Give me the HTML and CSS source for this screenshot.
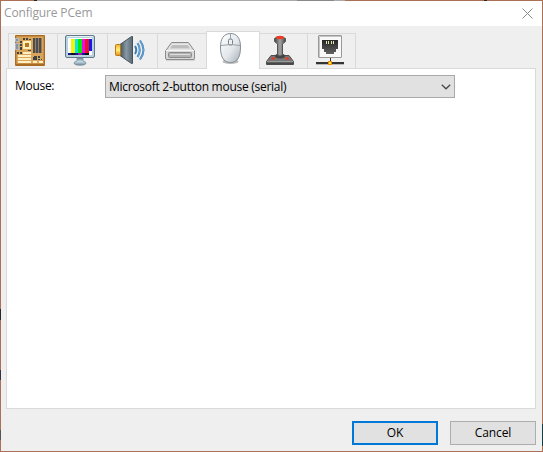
FILE: index.html
```html
<!DOCTYPE html>
<html lang="en">
<head>
<meta charset="utf-8">
<title>Configure PCem</title>
<link rel="stylesheet" href="styles.css">
</head>
<body>
<div class="window">
  <header class="titlebar">
    <span class="title">Configure PCem</span>
    <svg class="close" width="11" height="11" viewBox="0 0 11 11"><path d="M.5 .5l10 10M10.5 .5l-10 10" stroke="#888" fill="none"/></svg>
  </header>
  <nav class="tabs">
    <div class="tab machine">
      <svg width="32" height="32" viewBox="0 0 32 32">
        <rect x="1" y="1" width="30" height="31" rx="1" fill="#a96c25"/>
        <rect x="2" y="2" width="28" height="28" fill="#c98e43"/>
        <path d="M3 3h26v26H3z" fill="#d9a45c"/>
        <path d="M19 4h2v15h-2zM22 4h2v15h-2zM25 4h2v15h-2z" fill="#4a4d52"/>
        <path d="M21 4h1v15h-1zM24 4h1v15h-1zM27 4h1v15h-1z" fill="#9b7e55"/>
        <rect x="9" y="7" width="8" height="8" fill="#fff0b8"/><rect x="11" y="9" width="4" height="4" fill="#b57628"/>
        <path d="M9 4h2v2H9zM12 4h2v2h-2zM15 5h2v1h-2zM6 7h2v2H6zM6 10h2v2H6zM6 13h2v3H6zM14 16h3v1h-3zM3 18h2v2H3zM6 18h2v2H6z" fill="#474238"/>
        <path d="M1 4h4v4H1zM1 9h4v7H1z" fill="#aeb9c2"/><path d="M2 5h2v2H2zM2 10h2v5H2z" fill="#8194a5"/>
        <path d="M9 18h8v2H9zM4 21h13v2H4zM4 24h13v2H4zM4 27h13v2H4zM19 27h4v2h-4zM25 27h4v2h-4z" fill="#fff0c2"/>
        <path d="M19 23h4v3h-4zM20 22h3v1h-3zM24 22h2v2h-2zM24 25h2v1h-2zM27 25h1v1h-1z" fill="#3d4248"/>
      </svg>
    </div>
    <div class="tab">
      <svg width="32" height="32" viewBox="0 0 32 32">
        <defs><linearGradient id="stand" x2="0" y2="1"><stop stop-color="#6f8798"/><stop offset=".5" stop-color="#c5dae7"/><stop offset="1" stop-color="#718795"/></linearGradient></defs>
        <path d="M13 24h6v3q3 .5 3 2.200q0 2-6 2t-6-2q0-1.700 3-2.200z" fill="url(#stand)" stroke="#7891a1" stroke-width=".8"/>
        <rect x="1.500" y="1.500" width="29" height="22" rx="1.500" fill="#b7d1df" stroke="#63798a"/>
        <path d="M3 2.500h26" stroke="#e4f3fa"/>
        <rect x="4" y="4" width="24" height="17" fill="#fff"/>
        <path d="M7 5h4v14H7z" fill="#f4f40b"/><path d="M11 5h3v14h-3z" fill="#06e5e9"/><path d="M14 5h4v14h-4z" fill="#08e909"/><path d="M18 5h3v14h-3z" fill="#e90cec"/><path d="M21 5h4v14h-4z" fill="#ed1026"/><path d="M25 5h3v12h-3z" fill="#1717e9"/>
        <path d="M4 19h3v2H4zM11 19h3v2h-3zM18 19h3v2h-3z" fill="#15168d"/><path d="M7 19h4v2H7zM21 19h4v2h-4z" fill="#111"/><path d="M14 19h4v2h-4z" fill="#a020ac"/>
      </svg>
    </div>
    <div class="tab">
      <svg width="32" height="32" viewBox="0 0 32 32">
        <defs><linearGradient id="cone" x2="1"><stop stop-color="#43515c"/><stop offset=".5" stop-color="#8799a4"/><stop offset="1" stop-color="#596873"/></linearGradient><linearGradient id="gold" x2="0" y2="1"><stop stop-color="#f3b529"/><stop offset=".5" stop-color="#fff37c"/><stop offset="1" stop-color="#e48c10"/></linearGradient></defs>
        <path d="M6 10.500L17.500 2.500h1v27h-1L6 21.500z" fill="url(#cone)" stroke="#46535c"/>
        <rect x="1.500" y="10.500" width="5" height="11" rx="1" fill="url(#gold)" stroke="#bd7812"/>
        <g fill="none" stroke="#397eb8" stroke-width="2"><path d="M21 12q2.500 4 0 8"/><path d="M23.500 9q4.500 7 0 14"/><path d="M26 6.500q7 9.500 0 19"/></g>
        <g fill="none" stroke="#8bc1e5" stroke-width=".6"><path d="M23.500 9q4.500 7 0 14M26 6.500q7 9.500 0 19"/></g>
      </svg>
    </div>
    <div class="tab">
      <svg width="32" height="32" viewBox="0 0 32 32">
        <path d="M2 25h29v2H2z" fill="#d4d4d4"/>
        <path d="M7.500 8.500h17L30.500 17v7q0 1.500-1.500 1.500H3q-1.500 0-1.500-1.500v-7z" fill="#d8d8d8" stroke="#8c8c8c"/>
        <path d="M8 10.500h16l3 4.500H5z" fill="#bdbdbd" stroke="#ebebeb"/>
        <path d="M2 16.500h28" stroke="#f8f8f8"/>
        <rect x="4.500" y="18.500" width="23" height="5" rx="1" fill="#b2b2b2" stroke="#8c8c8c"/><path d="M6 20.500h20" stroke="#dedede"/>
      </svg>
    </div>
    <div class="tab active">
      <svg width="32" height="34" viewBox="0 0 32 34">
        <defs><linearGradient id="mouse" x2="1" y2="1"><stop stop-color="#fff"/><stop offset=".55" stop-color="#e4e8eb"/><stop offset="1" stop-color="#a5afb7"/></linearGradient></defs>
        <ellipse cx="16.500" cy="29.500" rx="8" ry="2.500" fill="#bbb"/>
        <path d="M16.500 1.500C9.500 1.500 6.500 7 6.500 15c0 9 2.500 15.500 10 15.500S26.500 24 26.500 15C26.500 7 23.500 1.500 16.500 1.500z" fill="url(#mouse)" stroke="#858f97"/>
        <path d="M7 13.500q9.500-2 19 0M16.500 1.500v5" fill="none" stroke="#9aa3a9"/><rect x="14.500" y="7" width="4" height="6" rx="1.500" fill="#edf1f4" stroke="#717c85"/>
      </svg>
    </div>
    <div class="tab joystick">
      <svg width="32" height="32" viewBox="0 0 32 32">
        <defs><linearGradient id="stick" x2="1"><stop stop-color="#434343"/><stop offset=".5" stop-color="#a4a4a4"/><stop offset="1" stop-color="#484848"/></linearGradient></defs>
        <path d="M7 21.500h18l4.500 6v3h-27v-3z" fill="#777" stroke="#505050"/>
        <path d="M3 27.500h26" stroke="#999"/><path d="M3 29.500h26" stroke="#484848" stroke-width="2"/>
        <ellipse cx="16" cy="22" rx="5" ry="2.500" fill="#444"/>
        <path d="M10.500 4.500q5-4 11 0v3L18.500 10v11q-2.500 2-5 0V10l-3-2.500z" fill="url(#stick)" stroke="#555"/>
        <ellipse cx="16" cy="3.500" rx="4" ry="1.700" fill="#f03a22"/><path d="M8 23.500h3.500l-1 2H7zM21 23.500h3.500l.5 2h-3z" fill="#f23320"/>
      </svg>
    </div>
    <div class="tab network">
      <svg width="32" height="32" viewBox="0 0 32 32">
        <defs><linearGradient id="socket" x2="0" y2="1"><stop stop-color="#252525"/><stop offset="1" stop-color="#626262"/></linearGradient></defs>
        <rect x="4.500" y="1.500" width="23" height="22" rx=".5" fill="#f8f8f8" stroke="#999"/><path d="M5.500 23V2.500H27" fill="none" stroke="#c5c5c5"/>
        <path d="M8 6h16v9h-2v3h-2v2h-8v-2h-2v-3H8z" fill="url(#socket)"/>
        <path d="M12.500 7v3M14.500 7v3M17.500 7v3M19.500 7v3" stroke="#e2e9a8"/>
        <path d="M16.500 24v4" stroke="#333"/><path d="M2 29h28" stroke="#343434" stroke-width="2"/><path d="M2 30.500h28" stroke="#bbb"/>
        <rect x="14.500" y="27.500" width="3" height="3" fill="#ffea36" stroke="#f18b0b"/>
      </svg>
    </div>
  </nav>
  <main class="panel">
    <label class="label">Mouse:</label>
    <div class="select"><span>Microsoft 2-button mouse (serial)</span><svg width="10" height="6" viewBox="0 0 10 6"><path d="M.8.8L5 4.800 9.200.8" fill="none" stroke="#444" stroke-width="1.200"/></svg></div>
  </main>
  <footer class="actions"><button class="button primary">OK</button><button class="button">Cancel</button></footer>
</div>
</body>
</html>
```
FILE: styles.css
```css
* { box-sizing: border-box; }
body {
  margin: 0;
  width: 543px;
  height: 452px;
  padding: 1px;
  overflow: hidden;
  font: 12px/16px "Open Sans", "Noto Sans", sans-serif;
  color: #000;
  background:
    linear-gradient(90deg, #ac7057 34px, #222 34px 37px, #aaa 37px 297px, #888 297px 334px, #aaa 334px 345px, #ac7057 345px 484px, #282828 484px 487px, #ac7057 487px) 0 0 / 100% 1px no-repeat,
    linear-gradient(#ac7057 309px, #25252a 309px 320px, #ac7057 320px 370px, #343340 370px 380px, #ac7057 380px 430px, #555 430px 440px, #ac7057 440px) 0 0 / 1px 100% no-repeat,
    linear-gradient(#ac7057 424px, #183c40 424px 446px, #ac7057 446px) 100% 0 / 1px 100% no-repeat,
    #ac7057;
}
.window { height: 450px; background: #efefef; display: flex; flex-direction: column; }
.titlebar { height: 25px; flex: none; background: #fff; display: flex; justify-content: space-between; padding: 4px 9px 0 3px; }
.title { color: #999; letter-spacing: -.15px; }
.close { margin-top: 3px; }
.tabs { height: 42px; flex: none; padding: 5px 0 0 7px; display: flex; align-items: flex-end; }
.tab { width: 50px; height: 35px; border: solid #d9d9d9; border-width: 1px 0 0 1px; padding-left: 6px; }
.tab svg { display: block; }
.machine { width: 49px; padding-left: 5px; }
.tab:nth-child(4) { width: 49px; }
.tab.active { width: 54px; height: 38px; margin-bottom: -1px; border-right-width: 1px; padding-left: 7px; background: #fff; position: relative; }
.joystick { width: 47px; border-left: 0; padding-left: 4px; }
.network { width: 49px; border-right-width: 1px; }
.panel { width: 530px; height: 341px; margin-left: 5px; flex: none; border: 1px solid #d9d9d9; background: #fff; display: flex; align-items: flex-start; padding: 6px 0 0 8px; }
.label { width: 90px; padding-top: 3px; letter-spacing: -.3px; }
.select { width: 350px; height: 23px; border: 1px solid #a9a9a9; background: #e1e1e1; display: flex; align-items: center; justify-content: space-between; padding: 0 3px; }
.select span { letter-spacing: -.27px; }
.actions { display: flex; justify-content: flex-end; gap: 12px; padding: 12px 6px 0 0; }
.button { width: 86px; height: 24px; border: 1px solid #adadad; background: #e1e1e1; padding: 0; font: inherit; letter-spacing: -.1px; color: #000; }
.primary { border: 2px solid #0078d7; }
```
